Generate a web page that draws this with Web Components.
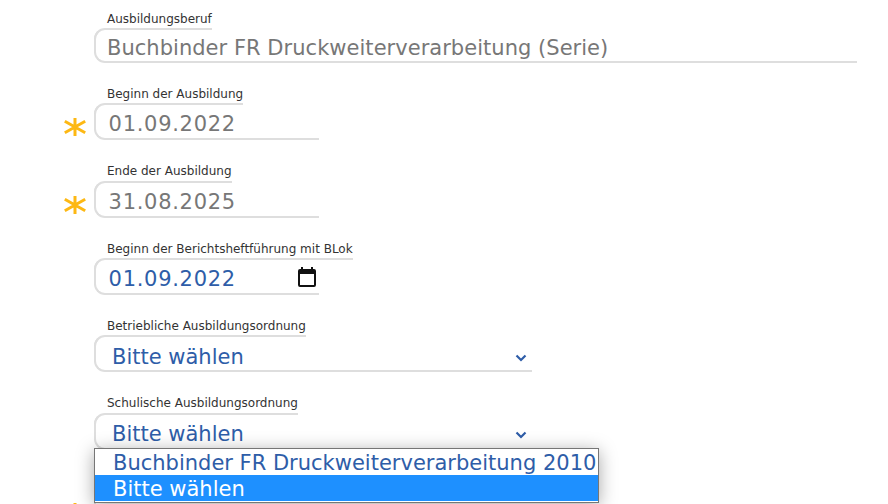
<!DOCTYPE html>
<html><head><meta charset="utf-8">
<style>
html,body{margin:0;padding:0;background:#fff;overflow:hidden;height:504px}
body{font-family:"DejaVu Sans",sans-serif}
</style></head><body>
<template id="field-t">
<style>
:host{display:flex;align-items:flex-start;--w:100%}
.gut{flex:0 0 94px;width:94px;align-self:stretch;display:flex;justify-content:flex-end;align-items:flex-end}
.star{display:none;margin:0 8px var(--sb,3px) 0;width:22px;height:20px;flex:none}
:host([required]) .star{display:block}
.main{flex:none;width:var(--w)}
.head{display:table;font-size:12px;line-height:15px;color:#333;white-space:nowrap}
.head span{display:block;padding-left:13px;min-height:15px}
.head::after{content:"";display:block;height:12px;margin-top:1.4px;border:solid #dedede;border-width:2px 0 0 2px;border-radius:11px 0 0 0;box-sizing:border-box}
.box{box-sizing:border-box;height:var(--h,37px);margin-top:-12px;border:solid #dedede;border-top-color:transparent;border-width:2px 0 2px 2px;border-radius:11px 0 0 11px;display:flex;align-items:center;justify-content:space-between;font-size:21px;letter-spacing:var(--ls,0);color:var(--c,#777);padding:5.5px 0 0 var(--pad,11px);white-space:nowrap}
::slotted(svg){flex:none}
</style>
<div class="gut"><svg class="star" viewBox="0 0 22 20"><g stroke="#fdb813" stroke-width="3" fill="none"><path d="M11 1V19M.8 4.3L21.2 15.7M21.2 4.3L.8 15.7"/></g></svg></div>
<div class="main"><div class="head"><span id="l"></span></div><div class="box"><slot></slot></div></div>
</template>
<template id="drop-t">
<style>
:host{position:absolute;left:94px;top:448px;width:505px;box-sizing:border-box;display:block;border:1px solid #767676;background:#fff;box-shadow:0 3px 18px rgba(0,0,0,.35);font-size:21px;line-height:26px;white-space:nowrap;color:#2e5da8;padding:0 0 1px}
div{padding:1px 0 0 18px;height:25px}
.sel{background:#1e90ff;color:#fff}
</style>
<div><slot name="a"></slot></div><div class="sel"><slot name="b"></slot></div>
</template>
<script>
class BField extends HTMLElement{constructor(){super();const r=this.attachShadow({mode:"open"});r.appendChild(document.getElementById("field-t").content.cloneNode(true));}
connectedCallback(){this.shadowRoot.getElementById("l").textContent=this.getAttribute("label");}}
class BDrop extends HTMLElement{constructor(){super();this.attachShadow({mode:"open"}).appendChild(document.getElementById("drop-t").content.cloneNode(true));}}
class BForm extends HTMLElement{constructor(){super();this.attachShadow({mode:"open"}).innerHTML='<style>:host{display:flex;flex-direction:column;gap:24px;padding-top:12px}</style><slot></slot>';}}
customElements.define("b-field",BField);customElements.define("b-drop",BDrop);customElements.define("b-form",BForm);
</script>
<b-form>
<b-field label="Ausbildungsberuf" style="--w:763px;--h:34.4px;--ls:.03px">Buchbinder FR Druckweiterverarbeitung (Serie)</b-field>
<b-field label="Beginn der Ausbildung" required style="--w:225px;--ls:.7px;--pad:12.6px"><span>01.09.2022</span></b-field>
<b-field label="Ende der Ausbildung" required style="--w:225px;--ls:.7px;--pad:12.6px"><span>31.08.2025</span></b-field>
<b-field label="Beginn der Berichtsheftführung mit BLok" style="--w:225px;--c:#2e5da8;--ls:.7px;--pad:12.6px"><span>01.09.2022</span><svg width="24" height="24" viewBox="0 0 24 24" style="margin-top:-5px"><path fill="#111" d="M19 4h-1V2h-2v2H8V2H6v2H5a2 2 0 0 0-2 2v14a2 2 0 0 0 2 2h14a2 2 0 0 0 2-2V6a2 2 0 0 0-2-2zm0 16H5V9h14v11z"/></svg></b-field>
<b-field label="Betriebliche Ausbildungsordnung" style="--w:438px;--c:#2e5da8;--pad:16px"><span>Bitte wählen</span><svg width="12" height="8" viewBox="0 0 12 8" style="margin:2px 5px 0 0"><path d="M1.5 1.5L6 6L10.5 1.5" fill="none" stroke="#2e5da8" stroke-width="2.2"/></svg></b-field>
<b-field label="Schulische Ausbildungsordnung" style="--w:438px;--c:#2e5da8;--pad:16px"><span>Bitte wählen</span><svg width="12" height="8" viewBox="0 0 12 8" style="margin:2px 5px 0 0"><path d="M1.5 1.5L6 6L10.5 1.5" fill="none" stroke="#2e5da8" stroke-width="2.2"/></svg></b-field>
<b-field label="" required style="--w:225px;--sb:5.2px"></b-field>
</b-form>
<b-drop><span slot="a">Buchbinder FR Druckweiterverarbeitung 2010</span><span slot="b">Bitte wählen</span></b-drop>
</body></html>
